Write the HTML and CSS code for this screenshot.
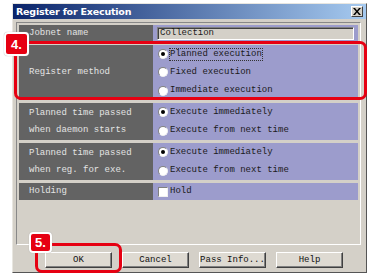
FILE: index.html
```html
<!DOCTYPE html>
<html>
<head>
<meta charset="utf-8">
<link rel="stylesheet" href="styles.css">
</head>
<body>
<div class="dialog">
  <div class="titlebar">
    <span class="title">Register for Execution</span>
    <span class="close">
      <svg width="8" height="7" viewBox="0 0 8 7"><path d="M0 0h2l2 2.5 2-2.5h2l-3 3.5 3 3.5h-2l-2-2.5-2 2.5h-2l3-3.5z" fill="#000"/></svg>
    </span>
  </div>
  <div class="panel">
    <div class="row r-jobnet">
      <div class="label">Jobnet name</div>
      <div class="value"><div class="field">Collection</div></div>
    </div>
    <div class="row r-method">
      <div class="label">Register method</div>
      <div class="value opts">
        <div class="opt"><span class="radio on"></span><span class="focus">Planned execution</span></div>
        <div class="opt"><span class="radio"></span><span>Fixed execution</span></div>
        <div class="opt"><span class="radio"></span><span>Immediate execution</span></div>
      </div>
    </div>
    <div class="row r-two">
      <div class="label">Planned time passed<br>when daemon starts</div>
      <div class="value opts">
        <div class="opt"><span class="radio on"></span><span>Execute immediately</span></div>
        <div class="opt"><span class="radio"></span><span>Execute from next time</span></div>
      </div>
    </div>
    <div class="row r-two">
      <div class="label">Planned time passed<br>when reg. for exe.</div>
      <div class="value opts">
        <div class="opt"><span class="radio on"></span><span>Execute immediately</span></div>
        <div class="opt"><span class="radio"></span><span>Execute from next time</span></div>
      </div>
    </div>
    <div class="row r-hold">
      <div class="label">Holding</div>
      <div class="value opts">
        <div class="opt"><span class="check"></span><span>Hold</span></div>
      </div>
    </div>
  </div>
  <div class="buttons">
    <div class="btn">OK</div>
    <div class="btn">Cancel</div>
    <div class="btn">Pass Info...</div>
    <div class="btn">Help</div>
  </div>
</div>
<div class="mark mark-4"></div>
<div class="badge badge-4">4.</div>
<div class="mark mark-5"></div>
<div class="badge badge-5">5.</div>
</body>
</html>
```
FILE: styles.css
```css
* { box-sizing: border-box; }
body {
  margin: 0;
  background: #fff;
  width: 372px;
  height: 277px;
  position: relative;
  overflow: hidden;
  font-family: "Liberation Mono", monospace;
}
.dialog {
  margin: 3px 0 0 12px;
  width: 355px;
  height: 270px;
  background: #d4d0c8;
  border: 1px solid;
  border-color: #e8e6e0 #555 #555 #e8e6e0;
  display: flex;
  flex-direction: column;
}
.titlebar {
  height: 15px;
  background: linear-gradient(to right, #0a246a, #a6caf0);
  display: flex;
  align-items: center;
  justify-content: space-between;
  padding: 0 3px 0 3px;
}
.title {
  color: #fff;
  font-family: "DejaVu Sans", sans-serif;
  font-weight: bold;
  font-size: 9.5px;
  letter-spacing: -0.2px;
}
.close {
  width: 12px;
  height: 11px;
  background: #d4d0c8;
  border: 1px solid;
  border-color: #fff #404040 #404040 #fff;
  display: flex;
  align-items: center;
  justify-content: center;
}
.panel {
  margin: 3px 5px 0 3px;
  height: 223px;
  border: 1px solid;
  border-color: #888 #fff #fff #888;
  background: #d4d0c8;
  padding: 2px 2px 0 2px;
  display: flex;
  flex-direction: column;
  gap: 3px;
}
.row {
  display: grid;
  grid-template-columns: 134px 1fr;
}
.label {
  background: #636363;
  color: #e4e4e4;
  font-size: 9px;
  padding-left: 10px;
  display: flex;
  align-items: center;
  line-height: 17px;
}
.value {
  background: #9c9ccc;
  color: #1a1a1a;
  font-size: 9px;
}
.r-jobnet { height: 17px; }
.r-jobnet .value { padding: 2px 4px 2px 4px; }
.field {
  height: 13px;
  background: #d4d0c8;
  border: 1px solid;
  border-color: #808080 #fff #fff #808080;
  box-shadow: inset 1px 1px 0 #404040;
  padding-left: 2px;
  line-height: 11px;
}
.r-method { height: 55px; }
.r-two { height: 37px; }
.r-hold { height: 14px; }
.opts {
  display: flex;
  flex-direction: column;
  justify-content: space-around;
  padding-left: 5px;
}
.opt {
  display: flex;
  align-items: center;
  gap: 2px;
  line-height: 11px;
}
.radio {
  width: 10px;
  height: 10px;
  border-radius: 50%;
  background: #fff;
  border: 1px solid;
  border-color: #808080 #f0f0f0 #f0f0f0 #808080;
  display: inline-flex;
  align-items: center;
  justify-content: center;
}
.radio.on::after {
  content: "";
  width: 4px;
  height: 4px;
  border-radius: 50%;
  background: #000;
}
.check {
  width: 10px;
  height: 10px;
  background: #fff;
  border: 1px solid;
  border-color: #808080 #f0f0f0 #f0f0f0 #808080;
}
.focus {
  outline: 1px dotted #333;
  outline-offset: 0;
}
.buttons {
  display: flex;
  padding: 7px 0 0 32px;
  gap: 10px;
}
.btn {
  width: 67px;
  height: 16px;
  background: #dedad2;
  border: 1px solid;
  border-color: #fff #404040 #404040 #fff;
  box-shadow: inset -1px -1px 0 #808080;
  font-size: 9px;
  color: #111;
  text-align: center;
  line-height: 14px;
}
.mark {
  position: absolute;
  border: 3px solid #e60012;
  border-radius: 7px;
}
.mark-4 { left: 14px; top: 41px; width: 353px; height: 59px; }
.mark-5 { left: 35px; top: 243px; width: 87px; height: 30px; }
.badge {
  position: absolute;
  background: #e60012;
  color: #fff;
  border: 2px solid #fff;
  border-radius: 4px;
  font-family: "Liberation Sans", sans-serif;
  font-weight: bold;
  font-size: 13px;
  display: flex;
  align-items: center;
  justify-content: center;
  box-shadow: 0 0 1px #999;
}
.badge-4 { left: 4px; top: 32px; width: 25px; height: 24px; }
.badge-5 { left: 29px; top: 232px; width: 23px; height: 21px; }
```
